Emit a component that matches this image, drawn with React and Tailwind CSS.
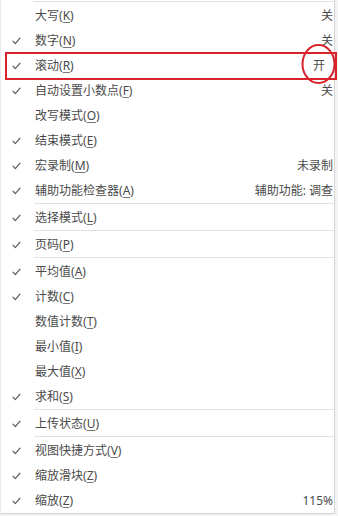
import React from 'react';

const items = [
  { label: '大写', key: 'K', value: '关', checked: false },
  { label: '数字', key: 'N', value: '关', checked: true },
  { label: '滚动', key: 'R', value: '开', checked: true, shifted: true },
  { label: '自动设置小数点', key: 'F', value: '关', checked: true },
  { label: '改写模式', key: 'O', checked: false },
  { label: '结束模式', key: 'E', checked: true },
  { label: '宏录制', key: 'M', value: '未录制', checked: true },
  { label: '辅助功能检查器', key: 'A', value: '辅助功能: 调查', checked: true, sep: true },
  { label: '选择模式', key: 'L', checked: true, sep: true },
  { label: '页码', key: 'P', checked: true, sep: true },
  { label: '平均值', key: 'A', checked: true },
  { label: '计数', key: 'C', checked: true },
  { label: '数值计数', key: 'T', checked: false },
  { label: '最小值', key: 'I', checked: false },
  { label: '最大值', key: 'X', checked: false },
  { label: '求和', key: 'S', checked: true, sep: true },
  { label: '上传状态', key: 'U', checked: true, sep: true },
  { label: '视图快捷方式', key: 'V', checked: true },
  { label: '缩放滑块', key: 'Z', checked: true },
  { label: '缩放', key: 'Z', value: '115%', checked: true },
];

function Check() {
  return (
    <svg width="9" height="8" viewBox="0 0 9 8" fill="none">
      <path d="M1 4.2 L3.3 6.6 L8 1.2" stroke="#5a5a5a" strokeWidth="1.2" strokeLinecap="round" strokeLinejoin="round" />
    </svg>
  );
}

function Separator() {
  return (
    <div className="h-[2px] pl-[33px]">
      <div className="h-px bg-[#e0e0e0]" />
    </div>
  );
}

function Row({ item }) {
  return (
    <div className="flex h-[25px] items-center">
      <div className="flex w-[35px] shrink-0 justify-center pl-[1px] pr-[5px]">
        {item.checked && <Check />}
      </div>
      <div className="flex-1 -ml-px">
        {item.label}(<span className="underline underline-offset-2 decoration-[#777]">{item.key}</span>)
      </div>
      {item.value && (
        <div className={item.shifted ? 'mr-[9px]' : 'mr-px'}>{item.value}</div>
      )}
    </div>
  );
}

export default function App() {
  return (
    <div
      className="relative flex h-[516px] w-[338px] flex-col overflow-hidden bg-[#f3f3f3] text-[12px] text-[#4a4a4a]"
      style={{ fontFamily: '"Noto Sans", "Noto Sans CJK SC", sans-serif' }}
    >
      <div className="flex h-[514px] w-[335px] flex-col border-b border-r border-l border-b-[#d4d4d4] border-r-[#d4d4d4] border-l-[#ececec] bg-white">
        <div className="h-[3px] pl-[32px] pt-px">
          <div className="h-px bg-[#e0e0e0]" />
        </div>
        {items.map((item, i) => (
          <React.Fragment key={i}>
            <Row item={item} />
            {item.sep && <Separator />}
          </React.Fragment>
        ))}
      </div>

      {/* annotations */}
      <div className="absolute left-[5px] top-[52px] h-[28px] w-[332px] border-2 border-[#d8232a]" />
      <svg className="absolute left-0 top-0" width="338" height="516" fill="none">
        <ellipse cx="318.5" cy="64" rx="16" ry="19" stroke="#d8232a" strokeWidth="2" />
      </svg>
    </div>
  );
}
